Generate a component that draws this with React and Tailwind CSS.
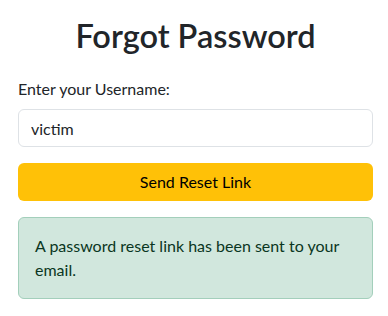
export default function App() {
  return (
    <div className="min-h-screen bg-white pl-[18px] pr-[15px] text-[16px] leading-6 text-[#212529] font-['Lato',sans-serif]">
      <h1 className="pt-[15px] pb-5 text-center text-[32.5px] font-semibold leading-[42px]">Forgot Password</h1>
      <form>
        <label htmlFor="username" className="mb-2 block">Enter your Username:</label>
        <input
          id="username"
          type="text"
          defaultValue="victim"
          className="block h-[38px] w-full rounded-md border border-[#dee2e6] px-3 py-1.5 text-[#212529] outline-none"
        />
        <button
          type="button"
          className="mt-4 block h-[38px] w-full rounded-md bg-[#ffc107] px-3 text-black"
        >
          Send Reset Link
        </button>
      </form>
      <div className="mt-4 rounded-md border border-[#a3cfbb] bg-[#d1e7dd] p-4 text-[#0a3622]">
        A password reset link has been sent to your email.
      </div>
    </div>
  )
}
